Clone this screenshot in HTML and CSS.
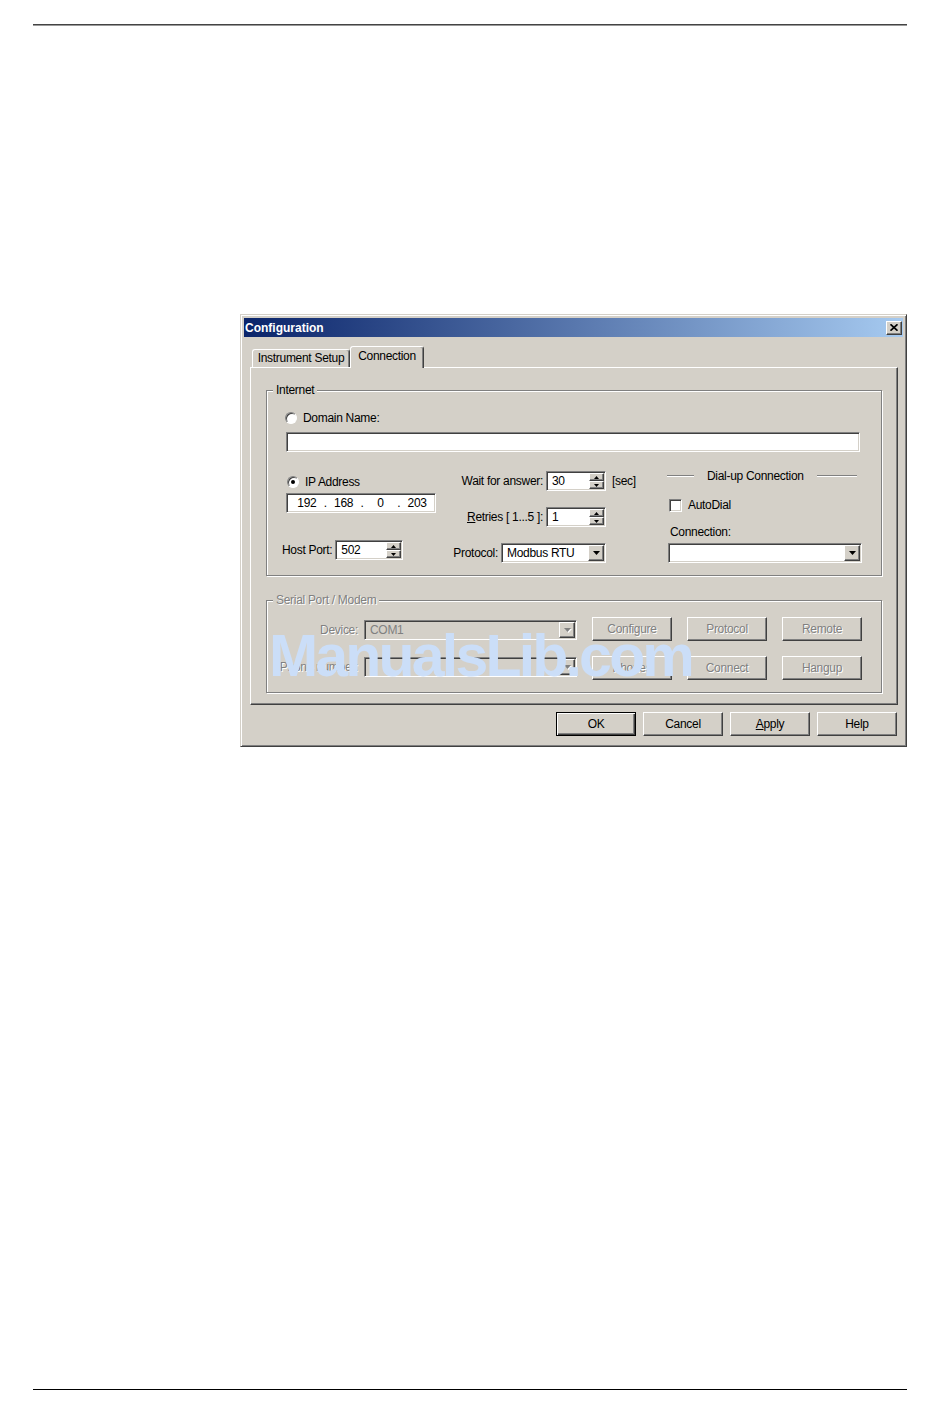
FILE: index.html
```html
<!DOCTYPE html>
<html lang="en">
  <head>
    <meta charset="UTF-8" />
    <title>Configuration</title>
    <link rel="stylesheet" href="styles.css">
  </head>
  <body>
    <div class="rule rule-top"></div>

    <div class="dialog">
      <!-- Title bar -->
      <div class="titlebar">
        <span class="title">Configuration</span>
        <button class="close-btn">
          <svg width="8" height="7" viewBox="0 0 8 7"><path d="M0.5 0.3l7 6.4M7.5 0.3l-7 6.4" stroke="#000" stroke-width="1.7" fill="none"/></svg>
        </button>
      </div>

      <!-- Tabs -->
      <div class="tabs">
        <div class="tab">Instrument Setup</div>
        <div class="tab tab-active">Connection</div>
      </div>

      <div class="panel">
        <!-- Internet group -->
        <div class="group">
          <div class="group-title">Internet</div>
          <div class="group-body internet-body">
            <div class="option-row domain-row">
              <span class="radio"></span>
              <span>Domain Name:</span>
            </div>
            <div class="field domain-field"></div>

            <div class="cols">
              <div class="col-ip">
                <div class="option-row ip-row">
                  <span class="radio checked"></span>
                  <span>IP Address</span>
                </div>
                <div class="field ip-field">
                  <span class="ip-part">192</span><span class="ip-dot">.</span>
                  <span class="ip-part">168</span><span class="ip-dot">.</span>
                  <span class="ip-part">0</span><span class="ip-dot">.</span>
                  <span class="ip-part">203</span>
                </div>
                <div class="host-row">
                  <span>Host Port:</span>
                  <div class="field spin host-spin">
                    <span class="field-text">502</span>
                    <span class="spin-btns">
                      <span class="spin-btn"><svg width="5" height="3"><path d="M2.5 0L5 3H0z"/></svg></span>
                      <span class="spin-btn"><svg width="5" height="3"><path d="M0 0h5L2.5 3z"/></svg></span>
                    </span>
                  </div>
                </div>
              </div>

              <div class="col-wait">
                <span class="lbl-r">Wait for answer:</span>
                <div class="field spin">
                  <span class="field-text">30</span>
                  <span class="spin-btns">
                    <span class="spin-btn"><svg width="5" height="3"><path d="M2.5 0L5 3H0z"/></svg></span>
                    <span class="spin-btn"><svg width="5" height="3"><path d="M0 0h5L2.5 3z"/></svg></span>
                  </span>
                </div>
                <span class="unit">[sec]</span>

                <span class="lbl-r"><u>R</u>etries [ 1...5 ]:</span>
                <div class="field spin">
                  <span class="field-text">1</span>
                  <span class="spin-btns">
                    <span class="spin-btn"><svg width="5" height="3"><path d="M2.5 0L5 3H0z"/></svg></span>
                    <span class="spin-btn"><svg width="5" height="3"><path d="M0 0h5L2.5 3z"/></svg></span>
                  </span>
                </div>
                <span></span>

                <div class="protocol-row">
                  <span>Protocol:</span>
                  <div class="field select protocol-select">
                    <span class="field-text">Modbus RTU</span>
                    <span class="drop-btn"><svg width="7" height="4"><path d="M0 0h7L3.5 4z"/></svg></span>
                  </div>
                </div>
              </div>

              <div class="col-dial">
                <div class="dial-header">
                  <span class="etch-line line-left"></span>
                  <span class="dial-text">Dial-up Connection</span>
                  <span class="etch-line line-right"></span>
                </div>
                <div class="option-row autodial-row">
                  <span class="checkbox"></span>
                  <span>AutoDial</span>
                </div>
                <div class="conn-label">Connection:</div>
                <div class="field select conn-select">
                  <span class="field-text"></span>
                  <span class="drop-btn"><svg width="7" height="4"><path d="M0 0h7L3.5 4z"/></svg></span>
                </div>
              </div>
            </div>
          </div>
        </div>

        <!-- Serial Port / Modem group (disabled) -->
        <div class="group group-serial">
          <div class="group-title disabled">Serial Port / Modem</div>
          <div class="group-body serial-body">
            <div class="serial-fields">
              <span class="lbl-r disabled">Device:</span>
              <div class="field select off">
                <span class="field-text">COM1</span>
                <span class="drop-btn"><svg width="7" height="4"><path d="M0 0h7L3.5 4z"/></svg></span>
              </div>
              <span class="lbl-r disabled">Phone number:</span>
              <div class="field select off">
                <span class="field-text"></span>
                <span class="drop-btn"><svg width="7" height="4"><path d="M0 0h7L3.5 4z"/></svg></span>
              </div>
            </div>
            <div class="serial-buttons">
              <button class="btn disabled">Configure</button>
              <button class="btn disabled">Protocol</button>
              <button class="btn disabled">Remote</button>
              <button class="btn disabled">Phones</button>
              <button class="btn disabled">Connect</button>
              <button class="btn disabled">Hangup</button>
            </div>
          </div>
        </div>
      </div>

      <!-- Dialog buttons -->
      <div class="dialog-buttons">
        <button class="btn btn-default">OK</button>
        <button class="btn">Cancel</button>
        <button class="btn"><u>A</u>pply</button>
        <button class="btn">Help</button>
      </div>

      <div class="watermark">ManualsLib.com</div>
    </div>

    <div class="rule rule-bottom"></div>
  </body>
</html>
```

FILE: styles.css
```css
/* Page */
body {
  margin: 0;
  background-color: #ffffff;
  font-family: "Liberation Sans", Arial, sans-serif;
  font-size: 12px;
  letter-spacing: -0.3px;
  color: #000000;
}

.rule {
  margin-left: 33px;
  width: 874px;
}

.rule-top {
  margin-top: 24px;
  height: 1px;
  background-color: #444444;
  border-bottom: 1px solid #9a9a9a;
}

.rule-bottom {
  margin-top: 642px;
  height: 1px;
  background-color: #000000;
  box-shadow: 7px 1px 0 0 #8a8a8a;
}

/* Dialog window */
.dialog {
  position: relative;
  margin: 288px 0 0 240px;
  width: 667px;
  box-sizing: border-box;
  padding: 3px;
  background-color: #d4d0c8;
  border: 1px solid;
  border-color: #d4d0c8 #404040 #404040 #d4d0c8;
  box-shadow: inset 1px 1px #ffffff, inset -1px -1px #808080;
}

.titlebar {
  height: 19px;
  display: flex;
  align-items: center;
  justify-content: space-between;
  padding: 0 1px 0 1px;
  background: linear-gradient(to right, #0a246a, #a6caf0);
}

.title {
  color: #ffffff;
  font-weight: bold;
  letter-spacing: 0;
}

.close-btn {
  width: 16px;
  height: 14px;
  padding: 0;
  display: flex;
  align-items: center;
  justify-content: center;
  background-color: #d4d0c8;
  border: 1px solid;
  border-color: #ffffff #404040 #404040 #ffffff;
  box-shadow: inset -1px -1px #808080;
}

/* Tabs */
.tabs {
  display: flex;
  align-items: flex-end;
  height: 21px;
  margin: 9px 0 0 8px;
}

.tab {
  width: 98px;
  height: 18px;
  box-sizing: border-box;
  border: 1px solid;
  border-bottom: none;
  border-color: #ffffff #404040 transparent #ffffff;
  border-radius: 3px 3px 0 0;
  box-shadow: inset -1px 0 #808080;
  text-align: center;
  line-height: 17px;
  white-space: nowrap;
}

.tab-active {
  width: 74px;
  height: 22px;
  margin-bottom: -1px;
  position: relative;
  z-index: 1;
  background-color: #d4d0c8;
  line-height: 19px;
}

.panel {
  margin-left: 6px;
  width: 648px;
  box-sizing: border-box;
  padding: 22px 15px 11px 15px;
  border: 1px solid;
  border-color: #ffffff #404040 #404040 #ffffff;
  box-shadow: inset -1px -1px #808080;
}

/* Group boxes */
.group {
  border: 1px solid #808080;
  box-shadow: inset 1px 1px #ffffff, 1px 1px #ffffff;
}

.group-title {
  width: fit-content;
  margin: -8px 0 0 6px;
  padding: 0 3px;
  line-height: 14px;
  background-color: #d4d0c8;
}

.internet-body {
  padding: 0 0 12px 19px;
}

.group-serial {
  margin-top: 24px;
}

.disabled {
  color: #808080;
  text-shadow: 1px 1px #ffffff;
}

/* Radios and checkbox */
.option-row {
  display: flex;
  align-items: center;
  gap: 6px;
  height: 16px;
}

.domain-row {
  margin: 13px 0 0 -1px;
}

.radio {
  position: relative;
  width: 12px;
  height: 12px;
  box-sizing: border-box;
  border-radius: 50%;
  background-color: #ffffff;
  border: 1px solid;
  border-color: #808080 #ffffff #ffffff #808080;
  box-shadow: inset 1px 1px #404040;
}

.radio.checked::after {
  content: "";
  position: absolute;
  left: 3px;
  top: 3px;
  width: 4px;
  height: 4px;
  border-radius: 50%;
  background-color: #000000;
}

.checkbox {
  width: 13px;
  height: 13px;
  box-sizing: border-box;
  background-color: #ffffff;
  border: 1px solid;
  border-color: #808080 #ffffff #ffffff #808080;
  box-shadow: inset 1px 1px #404040, inset -1px -1px #d4d0c8;
}

/* Sunken fields */
.field {
  height: 20px;
  box-sizing: border-box;
  display: flex;
  align-items: center;
  padding: 1px;
  background-color: #ffffff;
  border: 1px solid;
  border-color: #808080 #ffffff #ffffff #808080;
  box-shadow: inset 1px 1px #404040, inset -1px -1px #d4d0c8;
}

.field-text {
  flex: 1;
  padding-left: 4px;
  line-height: 16px;
  white-space: nowrap;
}

.domain-field {
  margin-top: 6px;
  width: 574px;
}

.spin {
  width: 60px;
}

.spin-btns {
  display: flex;
  flex-direction: column;
  width: 15px;
  align-self: stretch;
}

.spin-btn,
.drop-btn {
  box-sizing: border-box;
  display: flex;
  align-items: center;
  justify-content: center;
  background-color: #d4d0c8;
  border: 1px solid;
  border-color: #ffffff #404040 #404040 #ffffff;
  box-shadow: inset -1px -1px #808080;
}

.spin-btn {
  flex: 1;
}

.drop-btn {
  width: 16px;
  align-self: stretch;
}

.field.off {
  background-color: #d4d0c8;
  color: #808080;
}

.field.off .drop-btn svg {
  fill: #808080;
  filter: drop-shadow(1px 1px 0 #ffffff);
}

/* Internet columns */
.cols {
  display: flex;
}

.col-ip {
  width: 150px;
  margin-right: 6px;
}

.ip-row {
  margin: 22px 0 0 1px;
}

.ip-field {
  margin-top: 3px;
  width: 150px;
  padding-left: 3px;
}

.ip-part {
  width: 34px;
  text-align: center;
}

.ip-dot {
  width: 3px;
}

.host-row {
  display: flex;
  align-items: center;
  gap: 3px;
  margin: 27px 0 0 -4px;
}

.host-spin {
  width: 68px;
}

.col-wait {
  width: 198px;
  margin-right: 27px;
  padding-top: 19px;
  display: grid;
  grid-template-columns: 104px 60px 34px;
  grid-auto-rows: 20px;
  row-gap: 16px;
  align-content: start;
}

.lbl-r {
  align-self: center;
  text-align: right;
  padding-right: 3px;
  white-space: nowrap;
}

.unit {
  align-self: center;
  padding-left: 6px;
}

.protocol-row {
  grid-column: 1 / 3;
  display: flex;
  justify-content: flex-end;
  align-items: center;
  gap: 3px;
}

.protocol-select {
  width: 105px;
}

.col-dial {
  width: 195px;
}

.dial-header {
  display: flex;
  align-items: center;
  height: 14px;
  margin-top: 17px;
}

.etch-line {
  height: 1px;
  background-color: #808080;
  border-bottom: 1px solid #ffffff;
}

.line-left {
  width: 27px;
}

.line-right {
  flex: 1;
  margin-right: 5px;
}

.dial-text {
  margin: 0 13px;
  white-space: nowrap;
}

.autodial-row {
  height: 14px;
  margin: 15px 0 0 2px;
}

.conn-label {
  margin: 13px 0 0 3px;
  line-height: 14px;
}

.conn-select {
  margin: 4px 0 0 1px;
  width: 194px;
}

/* Serial port group */
.serial-body {
  display: flex;
  align-items: flex-start;
  padding: 0 0 12px 6px;
}

.serial-fields {
  margin-top: 13px;
  display: grid;
  grid-template-columns: 91px 213px;
  grid-auto-rows: 20px;
  row-gap: 17px;
}

.serial-fields .lbl-r {
  padding-right: 6px;
}

.serial-buttons {
  margin: 10px 0 0 15px;
  display: grid;
  grid-template-columns: repeat(3, 80px);
  grid-auto-rows: 24px;
  column-gap: 15px;
  row-gap: 15px;
}

/* Buttons */
.btn {
  height: 24px;
  padding: 0;
  font-family: inherit;
  font-size: 12px;
  letter-spacing: -0.3px;
  color: #000000;
  background-color: #d4d0c8;
  border: 1px solid;
  border-color: #ffffff #404040 #404040 #ffffff;
  box-shadow: inset -1px -1px #808080;
}

.btn.disabled {
  color: #808080;
}

.btn-default {
  border-color: #000000;
  box-shadow: inset 1px 1px #ffffff, inset -1px -1px #404040, inset -2px -2px #808080;
}

.dialog-buttons {
  display: flex;
  justify-content: flex-end;
  gap: 7px;
  margin: 7px 6px 7px 0;
}

.dialog-buttons .btn {
  width: 80px;
}

/* Watermark over the dialog */
.watermark {
  position: absolute;
  left: 28px;
  top: 312px;
  font-size: 59px;
  line-height: 59px;
  font-weight: bold;
  letter-spacing: -2.8px;
  color: #cbdef8;
  white-space: nowrap;
  pointer-events: none;
}
```
